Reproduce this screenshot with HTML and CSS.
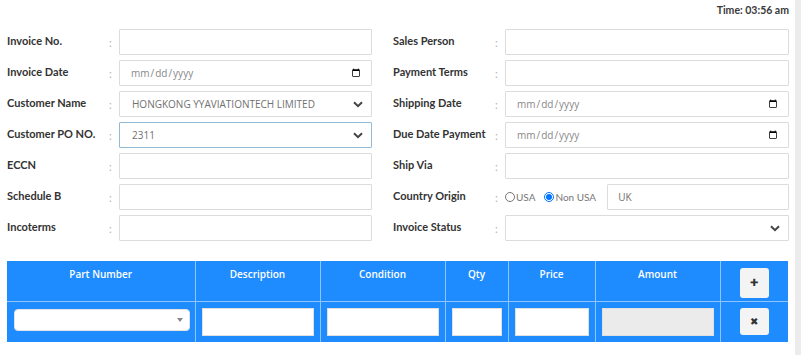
FILE: index.html
```html
<!DOCTYPE html>
<html lang="en">
<head>
  <meta charset="UTF-8">
  <meta name="viewport" content="width=device-width, initial-scale=1.0">
  <title>Invoice</title>
  <link rel="stylesheet" href="styles.css">
</head>
<body>
  <div class="page">
    <div class="time-row">Time: 03:56 am</div>

    <div class="form-grid">
      <div class="col">
        <div class="field">
          <label>Invoice No.</label><span class="colon">:</span>
          <input type="text" class="ctl">
        </div>
        <div class="field">
          <label>Invoice Date</label><span class="colon">:</span>
          <input type="date" class="ctl">
        </div>
        <div class="field">
          <label>Customer Name</label><span class="colon">:</span>
          <div class="select-wrap">
            <select class="ctl sel">
              <option>HONGKONG YYAVIATIONTECH LIMITED</option>
            </select>
            <svg class="chev" width="10" height="7" viewBox="0 0 10 7"><path d="M1 1.2 5 5.2 9 1.2" fill="none" stroke="#444" stroke-width="2"/></svg>
          </div>
        </div>
        <div class="field">
          <label>Customer PO NO.</label><span class="colon">:</span>
          <div class="select-wrap">
            <select class="ctl sel focus">
              <option>2311</option>
            </select>
            <svg class="chev" width="10" height="7" viewBox="0 0 10 7"><path d="M1 1.2 5 5.2 9 1.2" fill="none" stroke="#444" stroke-width="2"/></svg>
          </div>
        </div>
        <div class="field">
          <label>ECCN</label><span class="colon">:</span>
          <input type="text" class="ctl">
        </div>
        <div class="field">
          <label>Schedule B</label><span class="colon">:</span>
          <input type="text" class="ctl">
        </div>
        <div class="field">
          <label>Incoterms</label><span class="colon">:</span>
          <input type="text" class="ctl">
        </div>
      </div>

      <div class="col">
        <div class="field">
          <label>Sales Person</label><span class="colon">:</span>
          <input type="text" class="ctl">
        </div>
        <div class="field">
          <label>Payment Terms</label><span class="colon">:</span>
          <input type="text" class="ctl">
        </div>
        <div class="field">
          <label>Shipping Date</label><span class="colon">:</span>
          <input type="date" class="ctl">
        </div>
        <div class="field">
          <label>Due Date Payment</label><span class="colon">:</span>
          <input type="date" class="ctl">
        </div>
        <div class="field">
          <label>Ship Via</label><span class="colon">:</span>
          <input type="text" class="ctl">
        </div>
        <div class="field">
          <label>Country Origin</label><span class="colon">:</span>
          <div class="origin">
            <label class="radio"><input type="radio" name="origin">USA</label>
            <label class="radio"><input type="radio" name="origin" checked>Non USA</label>
            <input type="text" class="ctl" value="UK">
          </div>
        </div>
        <div class="field">
          <label>Invoice Status</label><span class="colon">:</span>
          <div class="select-wrap">
            <select class="ctl sel">
              <option></option>
            </select>
            <svg class="chev" width="10" height="7" viewBox="0 0 10 7"><path d="M1 1.2 5 5.2 9 1.2" fill="none" stroke="#444" stroke-width="2"/></svg>
          </div>
        </div>
      </div>
    </div>

    <table class="items">
      <thead>
        <tr>
          <th class="c-part">Part Number</th>
          <th class="c-desc">Description</th>
          <th class="c-cond">Condition</th>
          <th class="c-qty">Qty</th>
          <th class="c-price">Price</th>
          <th class="c-amt">Amount</th>
          <th class="c-act"><button class="btn-sq">&#10010;</button></th>
        </tr>
      </thead>
      <tbody>
        <tr>
          <td>
            <div class="select-wrap">
              <select class="cell-sel"><option></option></select>
              <span class="tri"></span>
            </div>
          </td>
          <td><input type="text" class="cell-in"></td>
          <td><input type="text" class="cell-in"></td>
          <td><input type="text" class="cell-in"></td>
          <td><input type="text" class="cell-in"></td>
          <td><input type="text" class="cell-in" readonly></td>
          <td class="c-act"><button class="btn-sq">&#10006;</button></td>
        </tr>
      </tbody>
    </table>
  </div>
</body>
</html>
```

FILE: styles.css
```css
html {
  background: linear-gradient(to left, #ececec 6px, #ffffff 6px);
}

body {
  margin: 0;
  font-family: Lato, "Open Sans", sans-serif;
  color: #333;
}

.page {
  padding: 0 12px 0 7px;
}

.time-row {
  text-align: right;
  font-size: 10.5px;
  font-weight: bold;
  color: #3a3a3a;
  height: 29px;
  line-height: 20px;
}

.form-grid {
  display: grid;
  grid-template-columns: 365px 1fr;
  column-gap: 21px;
}

.col {
  display: flex;
  flex-direction: column;
  gap: 5px;
}

.field {
  display: grid;
  grid-template-columns: 102px 10px 1fr;
  align-items: center;
  height: 26px;
}

.field > label {
  font-size: 11px;
  font-weight: bold;
  color: #333;
  position: relative;
  top: -2px;
}

.colon {
  color: #b0b0b0;
  font-size: 11px;
}

.ctl {
  box-sizing: border-box;
  width: 100%;
  height: 26px;
  border: 1px solid #dcdcdc;
  border-radius: 1px;
  background: #fff;
  font-family: "Open Sans", sans-serif;
  font-size: 10px;
  color: #707070;
  padding: 0 10px;
  outline: none;
}

input[type="date"].ctl {
  color: #888;
  padding-right: 8px;
}

.select-wrap {
  position: relative;
}

.sel {
  appearance: none;
  -webkit-appearance: none;
  padding-left: 12px;
}

.sel.focus {
  border-color: #8fbcd4;
}

.chev {
  position: absolute;
  right: 9px;
  top: 10px;
  pointer-events: none;
}

.origin {
  display: flex;
  align-items: center;
}

.radio {
  display: flex;
  align-items: center;
  font-size: 10px;
  color: #777;
  margin-right: 9px;
}

.radio + .radio {
  margin-right: 11px;
}

.radio input {
  margin: 0 1px 0 0;
  width: 10px;
  height: 10px;
}

.origin .ctl {
  flex: 1;
}

.items {
  width: 781px;
  margin-top: 20px;
  border-collapse: collapse;
  background: #1e8cff;
  font-family: "Open Sans", sans-serif;
}

.items th,
.items td {
  border: 1px solid #8ec5ff;
  padding: 0 6px;
}

.items tr > :first-child { border-left: none; }
.items tr > :last-child { border-right: none; }
.items thead th { border-top: none; }
.items tbody td { border-bottom: none; }

.items th {
  height: 40px;
  color: #fff;
  font-size: 10px;
  font-weight: 600;
  vertical-align: top;
  padding-top: 6px;
  box-sizing: border-box;
}

.items td {
  height: 41px;
  box-sizing: border-box;
}

.c-part { width: 188px; }
.c-desc { width: 125px; }
.c-cond { width: 125px; }
.c-qty { width: 63px; }
.c-price { width: 87px; }
.c-amt { width: 125px; }

.items .c-act {
  text-align: center;
  padding: 0;
}

.items th.c-act {
  vertical-align: middle;
  padding-top: 4px;
}

.cell-in {
  box-sizing: border-box;
  width: 100%;
  height: 28px;
  border: 1px solid #e0e0e0;
  background: #fff;
  display: block;
  outline: none;
}

.cell-in[readonly] {
  background: #ebebeb;
}

.cell-sel {
  appearance: none;
  -webkit-appearance: none;
  box-sizing: border-box;
  width: 100%;
  height: 22px;
  border: 1px solid #e3e3e3;
  border-radius: 4px;
  background: #fff;
  display: block;
  margin-left: 1px;
  position: relative;
  top: -2px;
}

.tri {
  position: absolute;
  right: 6px;
  top: 7px;
  border-left: 3px solid transparent;
  border-right: 3px solid transparent;
  border-top: 4px solid #888;
}

.btn-sq {
  width: 29px;
  height: 30px;
  border: none;
  border-radius: 3px;
  background: #f4f4f4;
  color: #333;
  font-size: 10px;
  padding: 0;
  cursor: pointer;
}

tbody .btn-sq {
  height: 27px;
}
```
